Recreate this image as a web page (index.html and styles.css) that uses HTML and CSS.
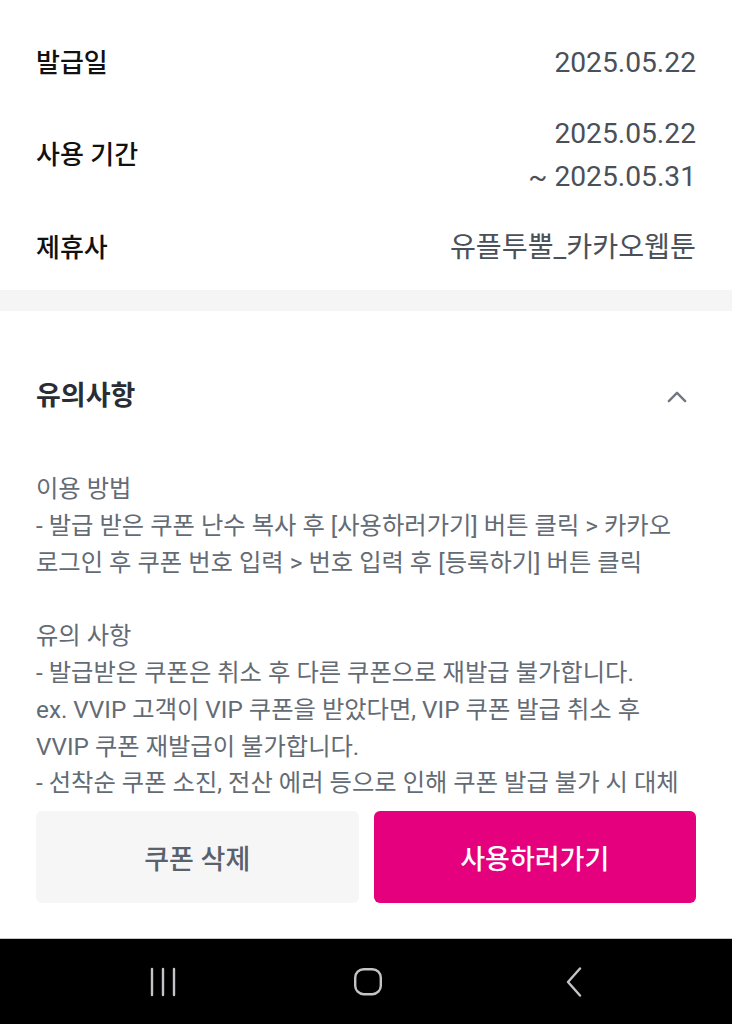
FILE: index.html
```html
<!DOCTYPE html>
<html lang="ko">
<head>
<meta charset="utf-8">
<title>쿠폰 상세</title>
<link rel="stylesheet" href="styles.css">
</head>
<body>
<div class="screen">
  <section class="info">
    <div class="row">
      <span class="label">발급일</span>
      <span class="value">2025.05.22</span>
    </div>
    <div class="row">
      <span class="label">사용 기간</span>
      <span class="value">2025.05.22<br>~ 2025.05.31</span>
    </div>
    <div class="row">
      <span class="label">제휴사</span>
      <span class="value">유플투뿔_카카오웹툰</span>
    </div>
  </section>

  <div class="band"></div>

  <section class="notice">
    <div class="notice-head">
      <h2 class="notice-title">유의사항</h2>
      <svg class="chevron" width="22" height="14" viewBox="0 0 22 14" aria-hidden="true">
        <path d="M2 12 L11 3 L20 12" fill="none" stroke="#6f7882" stroke-width="2.6" stroke-linecap="round" stroke-linejoin="round"/>
      </svg>
    </div>
    <p class="notice-body">이용 방법<br>- 발급 받은 쿠폰 난수 복사 후 [사용하러가기] 버튼 클릭 &gt; 카카오<br>로그인 후 쿠폰 번호 입력 &gt; 번호 입력 후 [등록하기] 버튼 클릭<br><br>유의 사항<br>- 발급받은 쿠폰은 취소 후 다른 쿠폰으로 재발급 불가합니다.<br>ex. VVIP 고객이 VIP 쿠폰을 받았다면, VIP 쿠폰 발급 취소 후<br>VVIP 쿠폰 재발급이 불가합니다.<br>- 선착순 쿠폰 소진, 전산 에러 등으로 인해 쿠폰 발급 불가 시 대체<br>쿠폰이 발급될 수 있습니다.</p>
  </section>

  <div class="actions">
    <button class="btn btn-secondary" type="button">쿠폰 삭제</button>
    <button class="btn btn-primary" type="button">사용하러가기</button>
  </div>

  <nav class="sysnav">
    <span class="navitem">
      <svg width="30" height="30" viewBox="0 0 30 30" aria-hidden="true">
        <path d="M4 2 V28 M15 2 V28 M26 2 V28" stroke="#c4c4c8" stroke-width="2.4" stroke-linecap="round"/>
      </svg>
    </span>
    <span class="navitem">
      <svg width="30" height="30" viewBox="0 0 30 30" aria-hidden="true">
        <rect x="2.2" y="2.2" width="25.6" height="25" rx="8.5" fill="none" stroke="#c4c4c8" stroke-width="2.4"/>
      </svg>
    </span>
    <span class="navitem">
      <svg width="30" height="30" viewBox="0 0 30 30" aria-hidden="true">
        <path d="M22 1.5 L10 15 L22 28.5" fill="none" stroke="#c4c4c8" stroke-width="2.4" stroke-linecap="round" stroke-linejoin="round"/>
      </svg>
    </span>
  </nav>
</div>
</body>
</html>
```

FILE: styles.css
```css
* { box-sizing: border-box; }

html, body {
  margin: 0;
  padding: 0;
  background: #ffffff;
}

body {
  width: 732px;
  height: 1024px;
  overflow: hidden;
  font-family: Roboto, "Noto Sans CJK KR", "Noto Sans", sans-serif;
}

.screen {
  position: relative;
  width: 732px;
  height: 1024px;
  overflow: hidden;
}

/* info rows */
.info {
  padding: 27px 36px 7px;
}

.row {
  display: flex;
  justify-content: space-between;
  align-items: center;
  padding: 14px 0;
}

.label {
  font-size: 26px;
  line-height: 42px;
  font-weight: 500;
  color: #111111;
}

.value {
  font-size: 28.2px;
  line-height: 43px;
  color: #4a5058;
  text-align: right;
}

.band {
  height: 21px;
  background: #f5f5f6;
}

/* notice */
.notice {
  padding: 60px 36px 0;
}

.notice-head {
  display: flex;
  align-items: center;
  justify-content: space-between;
  height: 50px;
}

.notice-title {
  margin: 0;
  font-size: 27px;
  line-height: 50px;
  font-weight: 700;
  color: #2a2e33;
}

.chevron {
  width: 20px;
  height: 13px;
  margin-right: 9px;
}

.notice-body {
  margin: 50px 0 0;
  font-size: 24.3px;
  line-height: 36.8px;
  color: #636b75;
  white-space: nowrap;
}

/* bottom actions */
.actions {
  position: absolute;
  left: 0;
  right: 0;
  bottom: 86px;
  display: grid;
  grid-template-columns: 1fr 1fr;
  gap: 15px;
  padding: 13px 36px 35px;
  background: #ffffff;
}

.btn {
  height: 92px;
  border: none;
  border-radius: 6px;
  font-family: Roboto, "Noto Sans CJK KR", sans-serif;
  font-size: 27px;
  font-weight: 500;
}

.btn-secondary {
  background: #f6f6f7;
  color: #59616c;
}

.btn-primary {
  background: #e5007e;
  color: #ffffff;
}

/* system nav */
.sysnav {
  position: absolute;
  left: 0;
  right: 0;
  bottom: 0;
  height: 86px;
  background: #000000;
  border-top: 1px solid #c9c9c9;
  display: grid;
  grid-template-columns: repeat(3, 1fr);
  padding: 0 57px 0 60px;
}

.navitem {
  display: flex;
  align-items: center;
  justify-content: center;
}
```
